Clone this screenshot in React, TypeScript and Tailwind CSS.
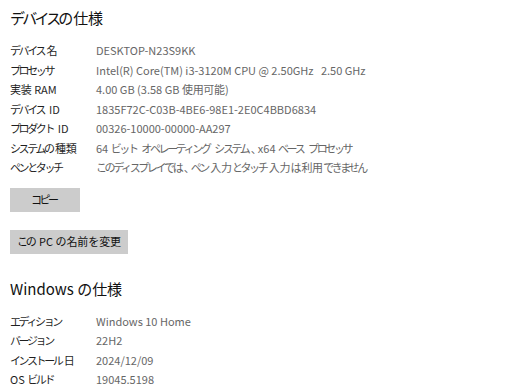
import React from "react";

const device: [string, string][] = [
  ["デバイス名", "DESKTOP-N23S9KK"],
  ["プロセッサ", "Intel(R) Core(TM) i3-3120M CPU @ 2.50GHz   2.50 GHz"],
  ["実装 RAM", "4.00 GB (3.58 GB 使用可能)"],
  ["デバイス ID", "1835F72C-C03B-4BE6-98E1-2E0C4BBD6834"],
  ["プロダクト ID", "00326-10000-00000-AA297"],
  ["システムの種類", "64 ビット オペレーティング システム、x64 ベース プロセッサ"],
  ["ペンとタッチ", "このディスプレイでは、ペン入力とタッチ入力は利用できません"],
];

const windows: [string, string][] = [
  ["エディション", "Windows 10 Home"],
  ["バージョン", "22H2"],
  ["インストール日", "2024/12/09"],
  ["OS ビルド", "19045.5198"],
];

type Kind = "kana" | "kanji" | "punct" | "latin";

function kindOf(ch: string): Kind {
  const c = ch.charCodeAt(0);
  if (c === 0x3001 || c === 0x3002) return "punct";
  if ((c >= 0x3003 && c <= 0x30ff) || c === 0xff08 || c === 0xff09) return "kana";
  if (c >= 0x4e00 && c <= 0x9fff) return "kanji";
  return "latin";
}

function segments(text: string): { k: Kind; t: string }[] {
  const out: { k: Kind; t: string }[] = [];
  for (const ch of text) {
    const k = kindOf(ch);
    const last = out[out.length - 1];
    if (last && last.k === k) last.t += ch;
    else out.push({ k, t: ch });
  }
  return out;
}

function J({ text, big }: { text: string; big?: boolean }) {
  return (
    <span>
      {segments(text).map((s, i) => {
        if (s.k === "latin") return <span key={i}>{s.t}</span>;
        if (s.k === "punct") {
          return (
            <span key={i} className="text-[11px] tracking-[-4px]">
              {s.t}
            </span>
          );
        }
        if (big) {
          return (
            <span
              key={i}
              className={s.k === "kana" ? "tracking-[-2.8px] mr-[2.8px]" : "tracking-[-0.3px] mr-[0.3px]"}
            >
              {s.t}
            </span>
          );
        }
        return (
          <span
            key={i}
            className={
              s.k === "kana"
                ? "text-[11px] tracking-[-2.4px] mr-[2.4px]"
                : "text-[11px] tracking-[-0.3px] mr-[0.3px]"
            }
          >
            {s.t}
          </span>
        );
      })}
    </span>
  );
}

function Rows({ rows }: { rows: [string, string][] }) {
  return (
    <div className="flex flex-col">
      {rows.map(([k, v]) => (
        <div key={k} className="flex h-[19.5px] items-center leading-[19.5px] text-[11px]">
          <div className="w-[86px] shrink-0 whitespace-pre text-[#1f1f1f]">
            <J text={k} />
          </div>
          <div className="whitespace-pre text-[#666666]">
            <J text={v} />
          </div>
        </div>
      ))}
    </div>
  );
}

export default function App() {
  return (
    <div className="w-[512px] h-[391px] overflow-hidden bg-white pl-[10px] pt-[6px] font-['Noto_Sans_CJK_JP','Noto_Sans',sans-serif]">
      <div className="text-[15px] leading-[24px] text-[#111]">
        <J text="デバイスの仕様" big />
      </div>
      <div className="mt-[11px]">
        <Rows rows={device} />
      </div>
      <div className="mt-[10px] flex h-[24px] w-[70px] items-center justify-center bg-[#cccccc] text-[11px] text-[#111]">
        <J text="コピー" />
      </div>
      <div className="mt-[18px] flex h-[24px] w-[118px] items-center justify-center whitespace-pre bg-[#cccccc] text-[11px] text-[#111]">
        <J text="この PC の名前を変更" />
      </div>
      <div className="mt-[23px] whitespace-pre text-[15px] leading-[24px] text-[#111]">
        <J text="Windows の仕様" big />
      </div>
      <div className="mt-[11px]">
        <Rows rows={windows} />
      </div>
    </div>
  );
}
